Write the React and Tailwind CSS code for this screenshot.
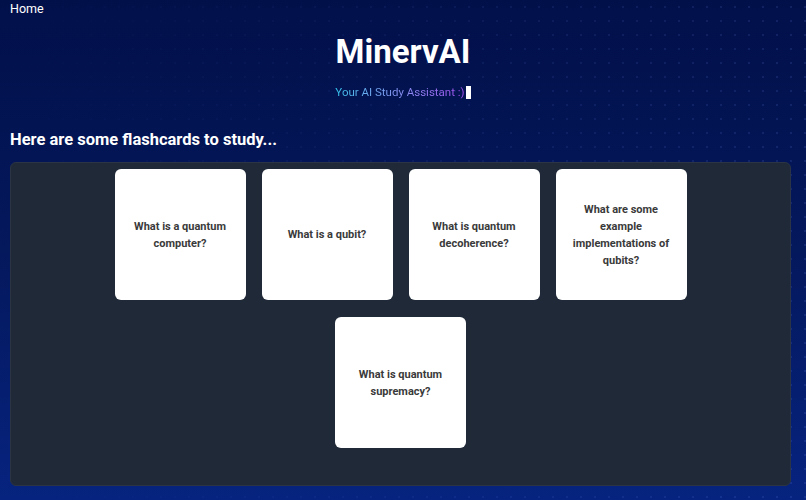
import React from "react";

const cards = [
  "What is a quantum computer?",
  "What is a qubit?",
  "What is quantum decoherence?",
  "What are some example implementations of qubits?",
  "What is quantum supremacy?",
];

const Flashcard = ({ question }) => (
  <div className="w-[131px] h-[131px] bg-white rounded-md flex items-center justify-center px-4 text-center">
    <p className="text-[11px] leading-[17px] font-bold text-[#3a3a3a]">{question}</p>
  </div>
);

export default function App() {
  return (
    <div
      className="relative min-h-[500px] w-full overflow-hidden bg-gradient-to-b from-[#02104a] via-[#04185c] to-[#06237f] text-white"
      style={{ fontFamily: "Roboto, 'Liberation Sans', sans-serif" }}
    >
      {/* faint starfield dots, stronger towards the right */}
      <div className="pointer-events-none absolute inset-0 opacity-30 bg-[radial-gradient(rgba(120,150,255,0.45)_1px,transparent_1px)] bg-[size:14px_14px] [mask-image:linear-gradient(to_right,transparent,black)]" />

      <div className="relative">
        <nav className="px-[10px] pt-[1px] text-[12.5px] leading-[16px]">Home</nav>

        <header className="flex flex-col items-center">
          <h1 className="mt-[15px] text-[33px] leading-[40px] font-bold">MinervAI</h1>
          <div className="mt-[13px] flex items-center text-[11.5px] leading-[14px]">
            <span className="bg-gradient-to-r from-[#2fc4ec] to-[#a34cf0] bg-clip-text text-transparent">
              Your AI Study Assistant :)
            </span>
            <span className="ml-[1px] inline-block w-[5px] h-[13px] bg-white" />
          </div>
        </header>

        <h2 className="mt-[30px] px-[10px] text-[16.5px] leading-[22px] font-bold">
          Here are some flashcards to study...
        </h2>

        <section className="ml-[10px] mr-[15px] mt-[11px] h-[324px] rounded-md bg-[#1f2937] border border-[#2a3444] pt-[6px]">
          <div className="mx-auto max-w-[572px] flex flex-wrap justify-center gap-x-4 gap-y-[17px]">
            {cards.map((q) => (
              <Flashcard key={q} question={q} />
            ))}
          </div>
        </section>
      </div>
    </div>
  );
}
